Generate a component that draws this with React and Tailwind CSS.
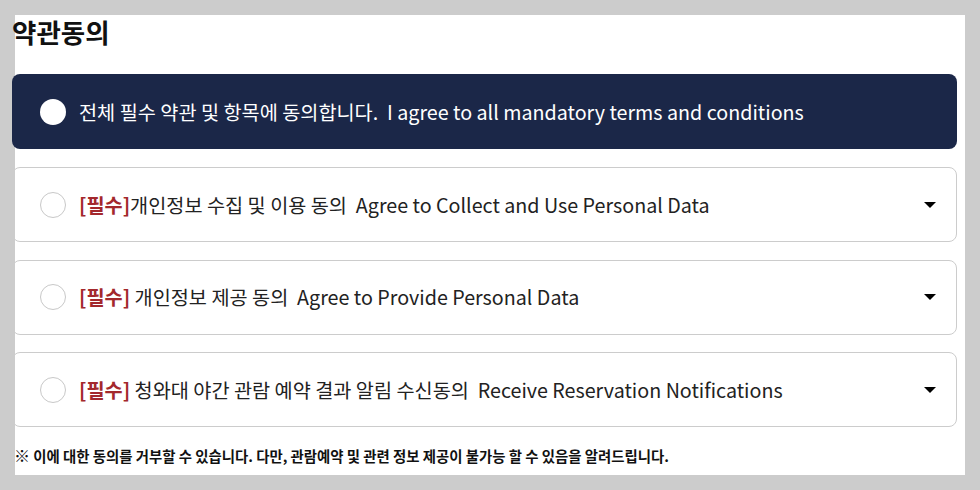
import React from 'react';

const items = [
  { ko: '개인정보 수집 및 이용 동의', en: 'Agree to Collect and Use Personal Data', space: false },
  { ko: '개인정보 제공 동의', en: 'Agree to Provide Personal Data', space: true },
  { ko: '청와대 야간 관람 예약 결과 알림 수신동의', en: 'Receive Reservation Notifications', space: true },
];

function Caret() {
  return (
    <svg width="12" height="6" viewBox="0 0 12 6" className="shrink-0">
      <path d="M0 0 H12 L6 6 Z" fill="#000" />
    </svg>
  );
}

export default function App() {
  return (
    <div className="w-[980px] h-[490px] bg-[#cccccc] p-[15px] font-['Noto_Sans_CJK_KR',sans-serif]">
      <div className="bg-white h-[460px]">
        <div className="-ml-[3px] w-[945px]">
          <h2 className="text-[26.5px] font-bold leading-[30px] text-[#111] pt-[2px] h-[59px]">약관동의</h2>

          <div className="h-[75px] rounded-[8px] bg-[#1b2748] flex items-center pl-[28px] mb-[18px]">
            <span className="w-[26px] h-[26px] rounded-full bg-white shrink-0" />
            <span className="ml-[13px] text-white text-[19.7px] leading-none">
              전체 필수 약관 및 항목에 동의합니다.&nbsp; I agree to all mandatory terms and conditions
            </span>
          </div>

          {items.map((it, i) => (
            <div
              key={i}
              className="h-[75px] rounded-[8px] border border-[#cccccc] flex items-center pl-[27px] pr-[20px] mb-[17.5px]"
            >
              <span className="w-[26px] h-[26px] rounded-full border border-[#c8c8c8] bg-white shrink-0" />
              <span className="ml-[13px] text-[19.7px] leading-none text-[#222] flex-1">
                <span className="text-[#a3282c] font-bold">[필수]</span>
                {it.space ? ' ' : ''}
                {it.ko}&nbsp; {it.en}
              </span>
              <Caret />
            </div>
          ))}

          <p className="text-[14.4px] font-bold text-[#111] leading-[20px] pl-[2px]">
            <span className="text-[16px] font-normal">※</span> 이에 대한 동의를 거부할 수 있습니다. 다만, 관람예약 및 관련 정보 제공이 불가능 할 수 있음을 알려드립니다.
          </p>
        </div>
      </div>
    </div>
  );
}
